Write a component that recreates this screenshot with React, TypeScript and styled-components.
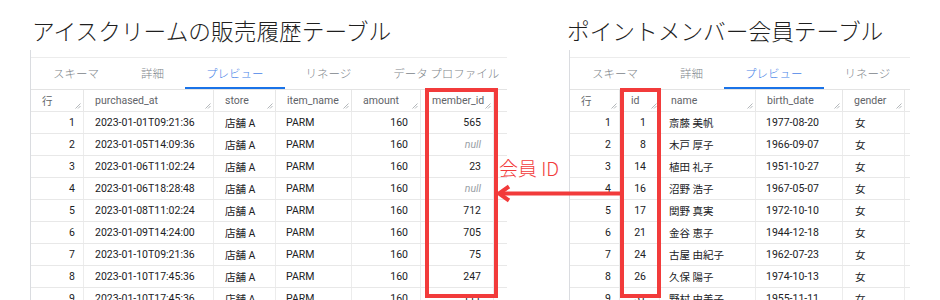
import React from 'react'
import styled, { createGlobalStyle } from 'styled-components'

const GlobalStyle = createGlobalStyle`
  html, body {
    margin: 0;
    padding: 0;
    background: #ffffff;
  }
  body {
    font-family: Roboto, "Noto Sans CJK JP", sans-serif;
  }
`

const RED = '#f23b3b'
const CJK = `Roboto, "Noto Sans CJK JP", sans-serif`

const Page = styled.div`
  position: relative;
  width: 940px;
  height: 300px;
  overflow: hidden;
  display: flex;
  gap: 62px;
  padding-left: 30px;
  box-sizing: border-box;
`

const Section = styled.section<{ $width: number }>`
  width: ${({ $width }) => $width}px;
  display: flex;
  flex-direction: column;
`

const Title = styled.h1<{ $shift: number }>`
  margin: 20px 0 8px ${({ $shift }) => $shift}px;
  font-family: "Noto Sans CJK JP", sans-serif;
  font-size: 22.7px;
  line-height: 22px;
  font-weight: 300;
  color: #1f1f1f;
  white-space: nowrap;
`

const Panel = styled.div`
  border-left: 1px solid #dadce0;
  padding-top: 7px;
  overflow: hidden;
  flex: 1;
`

const TabBar = styled.div`
  display: flex;
  border-top: 1px solid #ececec;
  height: 31px;
  padding-left: 1px;
`

const Tab = styled.div<{ $active?: boolean }>`
  display: flex;
  align-items: center;
  padding: 0 21px;
  font-family: "Noto Sans CJK JP", sans-serif;
  font-size: 11.5px;
  font-weight: 300;
  white-space: nowrap;
  color: ${({ $active }) => ($active ? '#4a86e8' : '#80868b')};
  border-bottom: 2px solid ${({ $active }) => ($active ? '#1a73e8' : 'transparent')};
`

const Row = styled.div<{ $cols: string; $head?: boolean }>`
  display: grid;
  grid-template-columns: ${({ $cols }) => $cols};
  height: ${({ $head }) => ($head ? 23 : 22)}px;
  box-sizing: border-box;
  border-top: ${({ $head }) => ($head ? '1px solid #e3e3e3' : 'none')};
  border-bottom: 1px solid #e8e8e8;
`

const HeadCell = styled.div`
  position: relative;
  display: flex;
  align-items: center;
  padding-left: 11px;
  border-right: 1px solid #e6e6e6;
  font-family: ${CJK};
  font-size: 10.5px;
  color: #5f6368;
  white-space: nowrap;
  overflow: hidden;
`

const Grip = styled.svg`
  position: absolute;
  right: 2px;
  bottom: 2px;
  width: 6px;
  height: 6px;
`

const Cell = styled.div<{ $align?: 'left' | 'right'; $pad: number; $null?: boolean }>`
  display: flex;
  align-items: center;
  justify-content: ${({ $align }) => ($align === 'right' ? 'flex-end' : 'flex-start')};
  padding: ${({ $align, $pad }) => ($align === 'right' ? `0 ${$pad}px 0 0` : `0 0 0 ${$pad}px`)};
  border-right: 1px solid #ececec;
  font-family: ${CJK};
  font-size: 10.5px;
  color: ${({ $null }) => ($null ? '#9aa0a6' : '#202124')};
  font-style: ${({ $null }) => ($null ? 'italic' : 'normal')};
  white-space: nowrap;
  overflow: hidden;
`

const Highlight = styled.div<{ $left: number; $width: number }>`
  position: absolute;
  left: ${({ $left }) => $left}px;
  top: 88px;
  width: ${({ $width }) => $width}px;
  height: 210px;
  border: 4px solid ${RED};
  box-sizing: border-box;
`

const Arrow = styled.svg`
  position: absolute;
  left: 494px;
  top: 183px;
  width: 128px;
  height: 22px;
`

const Label = styled.div`
  position: absolute;
  left: 499px;
  top: 155px;
  font-family: "Noto Sans CJK JP", sans-serif;
  font-size: 19px;
  font-weight: 300;
  line-height: 26px;
  color: ${RED};
  white-space: nowrap;
`

type Col = { name: string; width: number; align?: 'left' | 'right'; pad: number; grip?: boolean }

const ResizeGrip = () => (
  <Grip viewBox="0 0 6 6">
    <line x1="0.5" y1="5.5" x2="5.5" y2="0.5" stroke="#a0a4a8" strokeWidth="0.8" />
    <line x1="3" y1="5.5" x2="5.5" y2="3" stroke="#a0a4a8" strokeWidth="0.8" />
  </Grip>
)

const DataTable = ({ columns, rows }: { columns: Col[]; rows: string[][] }) => {
  const cols = columns.map((c) => `${c.width}px`).join(' ')
  return (
    <div>
      <Row $cols={cols} $head>
        {columns.map((c, i) => (
          <HeadCell key={i}>
            {c.name}
            {c.grip !== false && <ResizeGrip />}
          </HeadCell>
        ))}
      </Row>
      {rows.map((r, ri) => (
        <Row key={ri} $cols={cols}>
          {columns.map((c, ci) => (
            <Cell key={ci} $align={c.align} $pad={c.pad} $null={r[ci] === 'null'}>
              {r[ci]}
            </Cell>
          ))}
        </Row>
      ))}
    </div>
  )
}

const salesColumns: Col[] = [
  { name: '行', width: 53, align: 'right', pad: 8 },
  { name: 'purchased_at', width: 130, pad: 11 },
  { name: 'store', width: 62, pad: 11 },
  { name: 'item_name', width: 76, pad: 10 },
  { name: 'amount', width: 69, align: 'right', pad: 12 },
  { name: 'member_id', width: 73, align: 'right', pad: 12 },
  { name: '', width: 30, pad: 0, grip: false },
]

const salesRows = [
  ['1', '2023-01-01T09:21:36', '店舗 A', 'PARM', '160', '565'],
  ['2', '2023-01-05T14:09:36', '店舗 A', 'PARM', '160', 'null'],
  ['3', '2023-01-06T11:02:24', '店舗 A', 'PARM', '160', '23'],
  ['4', '2023-01-06T18:28:48', '店舗 A', 'PARM', '160', 'null'],
  ['5', '2023-01-08T11:02:24', '店舗 A', 'PARM', '160', '712'],
  ['6', '2023-01-09T14:24:00', '店舗 A', 'PARM', '160', '705'],
  ['7', '2023-01-10T09:21:36', '店舗 A', 'PARM', '160', '75'],
  ['8', '2023-01-10T17:45:36', '店舗 A', 'PARM', '160', '247'],
  ['9', '2023-01-10T17:45:36', '店舗 A', 'PARM', '160', '111'],
].map((r) => [...r, ''])

const memberColumns: Col[] = [
  { name: '行', width: 50, align: 'right', pad: 8 },
  { name: 'id', width: 40, align: 'right', pad: 13 },
  { name: 'name', width: 96, pad: 9 },
  { name: 'birth_date', width: 87, pad: 10 },
  { name: 'gender', width: 62, pad: 12 },
  { name: '', width: 30, pad: 0, grip: false },
]

const memberRows = [
  ['1', '1', '斎藤 美帆', '1977-08-20', '女'],
  ['2', '8', '木戸 厚子', '1966-09-07', '女'],
  ['3', '14', '植田 礼子', '1951-10-27', '女'],
  ['4', '16', '沼野 浩子', '1967-05-07', '女'],
  ['5', '17', '関野 真実', '1972-10-10', '女'],
  ['6', '21', '金谷 恵子', '1944-12-18', '女'],
  ['7', '24', '古屋 由紀子', '1962-07-23', '女'],
  ['8', '26', '久保 陽子', '1974-10-13', '女'],
  ['9', '31', '野村 由美子', '1955-11-11', '女'],
].map((r) => [...r, ''])

const App = () => (
  <>
    <GlobalStyle />
    <Page>
      <Section $width={477}>
        <Title $shift={2}>アイスクリームの販売履歴テーブル</Title>
        <Panel>
          <TabBar>
            <Tab>スキーマ</Tab>
            <Tab>詳細</Tab>
            <Tab $active>プレビュー</Tab>
            <Tab>リネージ</Tab>
            <Tab>データ プロファイル</Tab>
          </TabBar>
          <DataTable columns={salesColumns} rows={salesRows} />
        </Panel>
      </Section>
      <Section $width={341}>
        <Title $shift={-2}>ポイントメンバー会員テーブル</Title>
        <Panel>
          <TabBar>
            <Tab>スキーマ</Tab>
            <Tab>詳細</Tab>
            <Tab $active>プレビュー</Tab>
            <Tab>リネージ</Tab>
          </TabBar>
          <DataTable columns={memberColumns} rows={memberRows} />
        </Panel>
      </Section>

      <Highlight $left={425} $width={73} />
      <Highlight $left={620} $width={41} />
      <Label>会員 ID</Label>
      <Arrow viewBox="0 0 128 22">
        <line x1="5" y1="10.5" x2="126" y2="10.5" stroke={RED} strokeWidth="4" />
        <polyline points="15,3.5 5,10.5 15,17.5" fill="none" stroke={RED} strokeWidth="4" strokeLinejoin="miter" />
      </Arrow>
    </Page>
  </>
)

export default App
